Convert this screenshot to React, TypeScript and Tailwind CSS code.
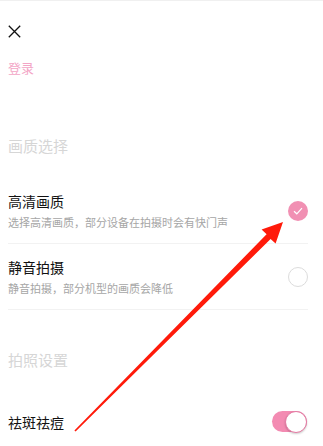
import React from 'react';

const font = { fontFamily: '"Noto Sans CJK SC", "Noto Sans", sans-serif' };

function CloseIcon() {
  return (
    <svg width="13" height="13" viewBox="0 0 13 13" className="block">
      <path d="M0.8 0.8 L12.2 12.2 M12.2 0.8 L0.8 12.2" stroke="#111" strokeWidth="1.3" fill="none" />
    </svg>
  );
}

function Radio({ checked }: { checked: boolean }) {
  if (checked) {
    return (
      <div className="flex h-[20px] w-[20px] items-center justify-center rounded-full bg-[#f190b3]">
        <svg width="10" height="8" viewBox="0 0 10 8">
          <path d="M1 4.2 L3.8 6.8 L9 1.2" stroke="#fff" strokeWidth="1.2" fill="none" />
        </svg>
      </div>
    );
  }
  return <div className="h-[20px] w-[20px] rounded-full border border-[#dcdcdc]" />;
}

function Toggle() {
  return (
    <div className="relative h-[21px] w-[35px] rounded-full bg-[#f38bb2]">
      <div className="absolute right-0 top-[-0.5px] h-[22px] w-[22px] rounded-full border border-[#e57aa3] bg-white shadow-[0_1px_2px_rgba(0,0,0,0.2)]" />
    </div>
  );
}

const rows = [
  { title: '高清画质', desc: '选择高清画质，部分设备在拍摄时会有快门声', checked: true },
  { title: '静音拍摄', desc: '静音拍摄，部分机型的画质会降低', checked: false },
];

export default function App() {
  return (
    <div className="relative h-[446px] w-[323px] overflow-hidden bg-white" style={font}>
      <div className="h-[1px] bg-[#f0f0f0]" />

      {/* 顶部 */}
      <div className="pl-[8px] pt-[24px]">
        <CloseIcon />
      </div>
      <div className="mt-[20px] pl-[8px] text-[13px] leading-[20px] text-[#f3a5c6]">登录</div>

      {/* 画质选择 */}
      <div className="mt-[58px] pl-[8px] text-[15px] leading-[20px] text-[#d6d6d6]">画质选择</div>
      <div className="mt-[22px] pl-[8px] pr-[15px]">
        {rows.map((row) => (
          <div key={row.title} className="flex items-center border-b border-[#f2f2f2] pt-[13px] pb-[13px]">
            <div className="flex flex-1 flex-col gap-[3px]">
              <div className="text-[14px] leading-[20px] text-[#111]">{row.title}</div>
              <div className="text-[11px] leading-[16px] text-[#a6a6a6]">{row.desc}</div>
            </div>
            <Radio checked={row.checked} />
          </div>
        ))}
      </div>

      {/* 拍照设置 */}
      <div className="mt-[40px] pl-[8px] text-[15px] leading-[20px] text-[#d6d6d6]">拍照设置</div>
      <div className="mt-[41px] flex items-center justify-between px-[8px]">
        <div className="text-[14px] leading-[20px] text-[#111]">祛斑祛痘</div>
        <div className="mr-[8px]">
          <Toggle />
        </div>
      </div>

      {/* 标注箭头 */}
      <svg className="pointer-events-none absolute left-0 top-0" width="323" height="446" viewBox="0 0 323 446">
        <polygon
          points="75.6,431.6 270.6,238.9 275.6,243.4 283,222 261.6,229.4 266.6,234.3 74.4,430.4"
          fill="#ff1a0a"
        />
      </svg>
    </div>
  );
}
